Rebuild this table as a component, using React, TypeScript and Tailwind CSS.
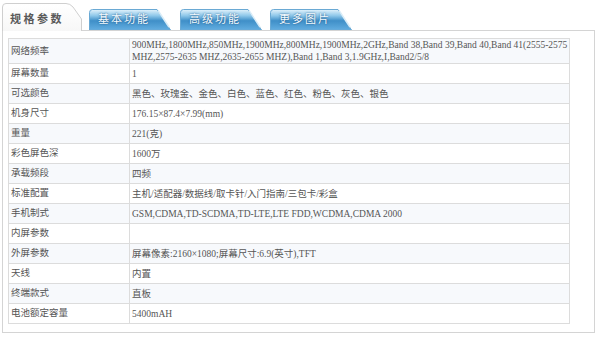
import React from 'react';

const rows: [string, string[]][] = [
  ['网络频率', [
    '900MHz,1800MHz,850MHz,1900MHz,800MHz,1900MHz,2GHz,Band 38,Band 39,Band 40,Band 41(2555-2575',
    'MHZ,2575-2635 MHZ,2635-2655 MHZ),Band 1,Band 3,1.9GHz,I,Band2/5/8',
  ]],
  ['屏幕数量', ['1']],
  ['可选颜色', ['黑色、玫瑰金、金色、白色、蓝色、红色、粉色、灰色、银色']],
  ['机身尺寸', ['176.15×87.4×7.99(mm)']],
  ['重量', ['221(克)']],
  ['彩色屏色深', ['1600万']],
  ['承载频段', ['四频']],
  ['标准配置', ['主机/适配器/数据线/取卡针/入门指南/三包卡/彩盒']],
  ['手机制式', ['GSM,CDMA,TD-SCDMA,TD-LTE,LTE FDD,WCDMA,CDMA 2000']],
  ['内屏参数', ['']],
  ['外屏参数', ['屏幕像素:2160×1080;屏幕尺寸:6.9(英寸),TFT']],
  ['天线', ['内置']],
  ['终端款式', ['直板']],
  ['电池额定容量', ['5400mAH']],
];

const BlueTab: React.FC<{ label: string; id: string; className?: string }> = ({ label, id, className }) => (
  <div className={`relative w-[82px] h-[21px] ${className ?? ''}`}>
    <svg className="absolute inset-0" width="82" height="21" viewBox="0 0 82 21">
      <defs>
        <linearGradient id={id} x1="0" y1="0" x2="0" y2="1">
          <stop offset="0" stopColor="#e2f2fb" />
          <stop offset="0.3" stopColor="#8fc8ea" />
          <stop offset="0.55" stopColor="#3f8fc8" />
          <stop offset="1" stopColor="#62ade0" />
        </linearGradient>
      </defs>
      <path d="M0.5 21 V3.5 Q0.5 0.5 3.5 0.5 H68 L81.5 21 Z" fill={`url(#${id})`} stroke="#6aa9d4" />
      <path d="M69 1.5 L80 18" stroke="#d8ecf8" strokeWidth="1.5" fill="none" />
    </svg>
    <span className="relative block pl-[9px] pt-[4px] text-[11px] leading-[13px] tracking-[2px] text-[#f4faff] [text-shadow:0_0_2px_#174e7c]">
      {label}
    </span>
  </div>
);

export default function App() {
  return (
    <div className="w-[600px] h-[338px] bg-white pt-[3px] pl-[2px] [font-family:'Liberation_Serif','Noto_Sans_CJK_SC',serif]">
      <div className="flex items-end h-[27px]">
        <div className="relative z-10 w-[80px] h-[28px] -mb-px">
          <svg className="absolute inset-0" width="80" height="28" viewBox="0 0 80 28">
            <defs>
              <linearGradient id="ga" x1="0" y1="0" x2="0" y2="1">
                <stop offset="0" stopColor="#ffffff" />
                <stop offset="1" stopColor="#f7f7f7" />
              </linearGradient>
            </defs>
            <path d="M0.5 28 V4 Q0.5 0.5 4 0.5 H64 Q68 0.5 71 4 L79.5 16 V28" fill="url(#ga)" stroke="#cfcfcf" />
          </svg>
          <span className="relative block pl-[8px] pt-[9px] text-[11px] leading-[13px] font-bold tracking-[2.5px] text-[#5a5a5a] [font-family:'Noto_Sans_CJK_SC',sans-serif]">
            规格参数
          </span>
        </div>
        <BlueTab id="g1" label="基本功能" className="ml-[7px]" />
        <BlueTab id="g2" label="高级功能" className="ml-[9px]" />
        <BlueTab id="g3" label="更多图片" className="ml-[8px]" />
      </div>
      <div className="w-[593px] h-[303px] border border-[#d4d4d4] pt-[7px] pl-[5px]">
        <div className="w-[562px] border-t border-l border-[#dcdcdc] text-[9.5px] text-[#555]">
          {rows.map(([label, value], i) => (
            <div
              key={label}
              className={`flex border-b border-[#dcdcdc] ${i === 0 ? 'h-[25px]' : 'h-[20px]'} ${i % 2 === 0 ? 'bg-[#f7f9fc]' : 'bg-white'}`}
            >
              <div className="w-[121px] shrink-0 border-r border-[#dcdcdc] pl-[2px] flex items-center">
                {label}
              </div>
              <div className="flex-1 border-r border-[#dcdcdc] pl-[2px] flex flex-col justify-center leading-[12px] whitespace-nowrap">
                {value.map((line, j) => (
                  <span key={j}>{line}</span>
                ))}
              </div>
            </div>
          ))}
        </div>
      </div>
    </div>
  );
}
